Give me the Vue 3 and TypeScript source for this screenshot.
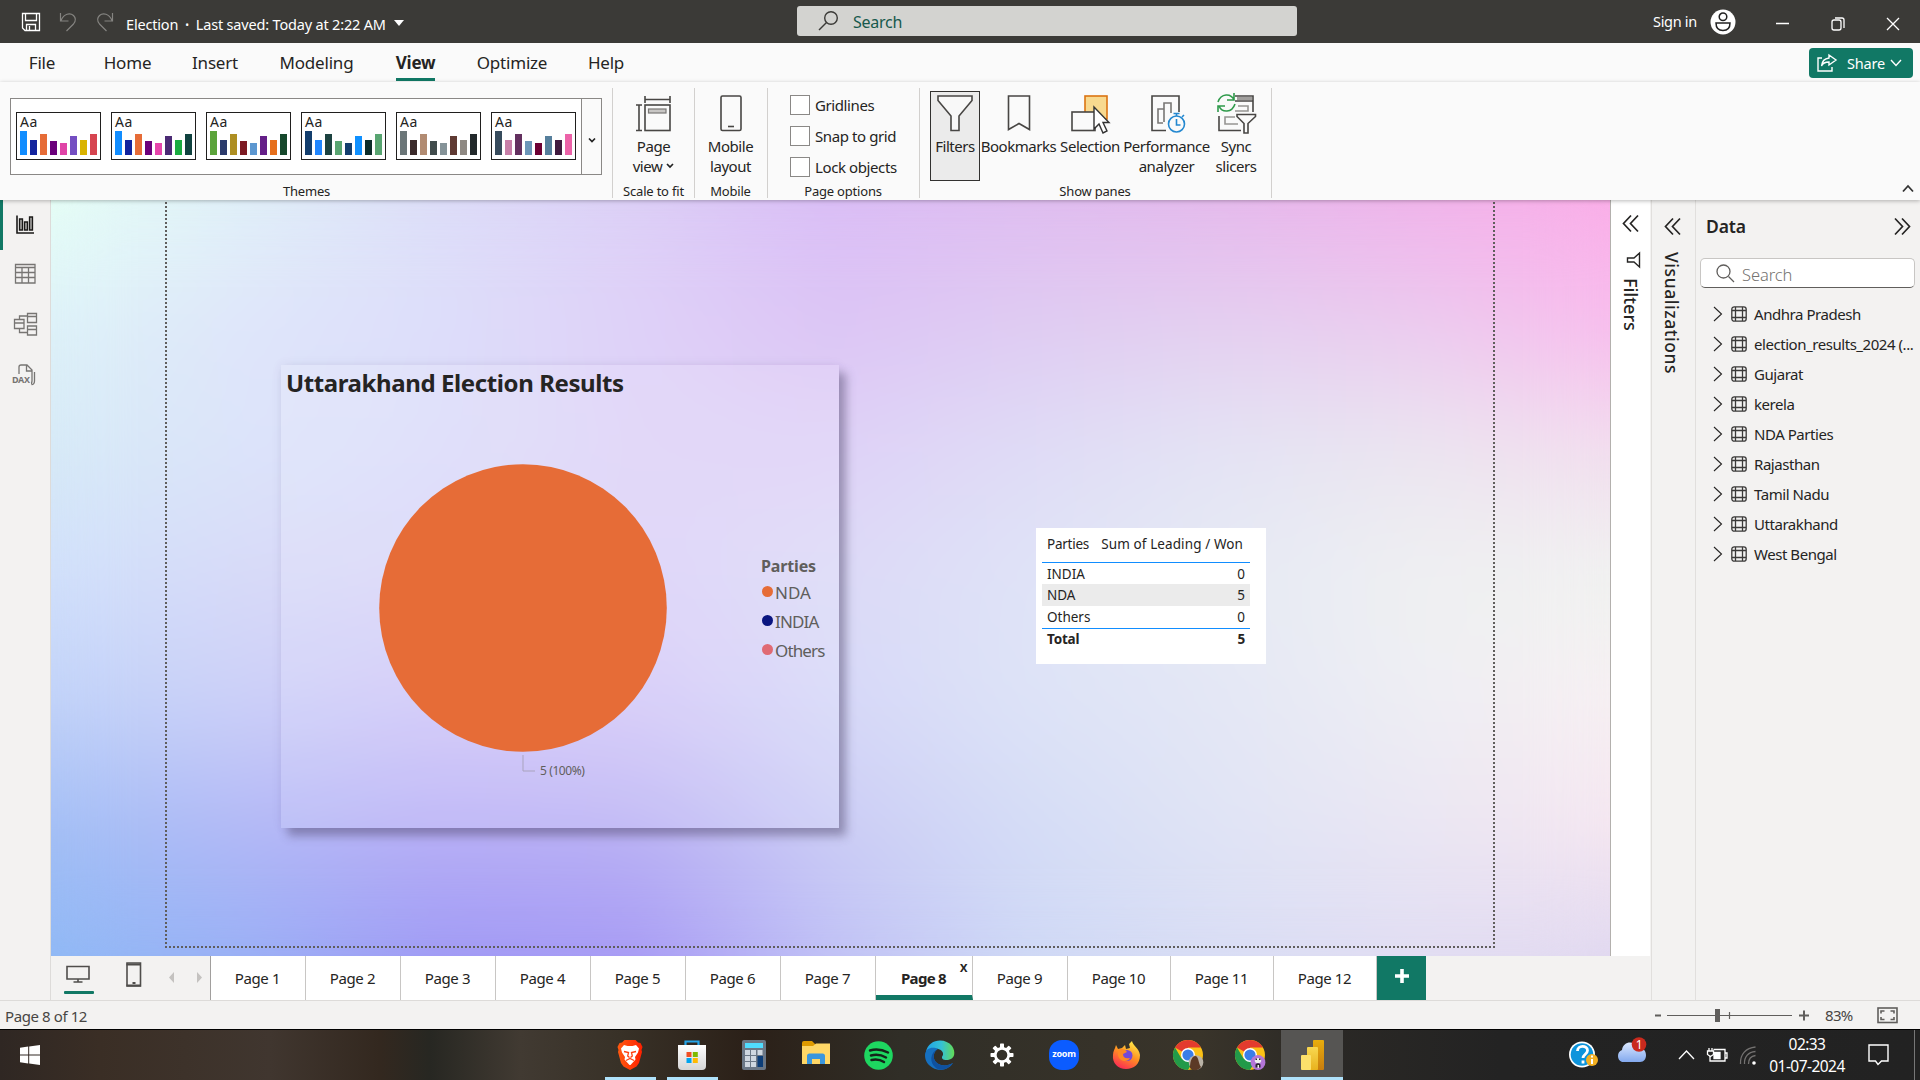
<script setup lang="ts">
const menu = [
  { label: 'File', width: 84 },
  { label: 'Home', width: 87 },
  { label: 'Insert', width: 88 },
  { label: 'Modeling', width: 115 },
  { label: 'View', width: 83 },
  { label: 'Optimize', width: 110 },
  { label: 'Help', width: 78 },
]

const barHeights = [24, 15, 21, 14, 12, 19, 15, 21]
const themes: string[][] = [
  ['#118dff', '#12239e', '#e66c37', '#6b007b', '#e044a7', '#744ec2', '#d9b300', '#d64550'],
  ['#118dff', '#12239e', '#e66c37', '#6b007b', '#e645ab', '#4b2a74', '#1aab40', '#10423f'],
  ['#5ba33a', '#2b3a6b', '#ae8f22', '#7d1a22', '#5c97d0', '#641f88', '#e66f1c', '#16482c'],
  ['#133e6d', '#2086ff', '#1c4240', '#58a571', '#133e6d', '#0f90ff', '#0c2c29', '#58a571'],
  ['#6b7678', '#3a2a2a', '#b18b72', '#414c4c', '#859398', '#5f3a33', '#8f8983', '#22292b'],
  ['#374b5c', '#c77fa8', '#63305f', '#6b96b8', '#6c0033', '#567f9c', '#401a3e', '#ec62a8'],
]

const options = ['Gridlines', 'Snap to grid', 'Lock objects']

const meshRows: string[][] = [
  ['#e6fff6', '#e0f0f8', '#ddddf8', '#dccff6', '#dabdf6', '#dfbcf0', '#e5b8ec', '#f0b2ea', '#fbaee8'],
  ['#ddf2f8', '#dfe5fa', '#dddefa', '#dfd1f8', '#dcc5f5', '#dfccf2', '#e4d0f0', '#ebccef', '#f8bded'],
  ['#d6eaf6', '#dce4fa', '#dcdcfa', '#ded3f7', '#dfd2f7', '#dfdcf6', '#e4e4f4', '#ebe6f0', '#f2deee'],
  ['#d0e0fb', '#d8daf8', '#d9d6fa', '#dcd2f8', '#dcdaf7', '#dfe3f7', '#e6eaf4', '#eff0f2', '#f0f2f0'],
  ['#c0d2f8', '#ccd0f8', '#d0c6f8', '#d4c8f8', '#d6d8f8', '#dde3f7', '#e4e7f5', '#eeeef3', '#f7eff2'],
  ['#a2bff5', '#b3b8f6', '#b8aff6', '#bab2f4', '#cbccf5', '#d4dcf6', '#e0e4f5', '#eae6f3', '#f5e6f0'],
  ['#8fb9f5', '#98aff5', '#9e98f4', '#a699f4', '#bfc0f5', '#ced8f5', '#d8dcf4', '#e0dcf2', '#e0d8f0'],
]
const mesh = meshRows.map((colors, i) => {
  const step = 100 / (meshRows.length - 1)
  return {
    backgroundImage: `linear-gradient(to right, ${colors.join(', ')})`,
    maskImage: i === 0 ? 'none' : `linear-gradient(transparent ${(i - 1) * step}%, #000 ${i * step}%)`,
  }
})

const legend = [
  { name: 'NDA', color: '#e66c37' },
  { name: 'INDIA', color: '#0a1580' },
  { name: 'Others', color: '#e06a74' },
]
const results = [
  { party: 'INDIA', won: 0 },
  { party: 'NDA', won: 5 },
  { party: 'Others', won: 0 },
]

const tables = ['Andhra Pradesh', 'election_results_2024 (...', 'Gujarat', 'kerela', 'NDA Parties', 'Rajasthan', 'Tamil Nadu', 'Uttarakhand', 'West Bengal']
const pages = Array.from({ length: 12 }, (_, i) => i + 1)
const teeth = Array.from({ length: 8 }, (_, i) => i * 45)
</script>

<template>
  <div class="app">
    <header class="titlebar">
      <svg class="quick" width="110" height="43" fill="none">
        <path d="M22.500 13.500h17v17h-14.500l-2.500-2.500zM25.500 13.500v7h11v-7M26.500 30.500v-6h9v6M29.500 26v4" stroke="#fff" stroke-width="1.300" />
        <path d="M60.500 13v8h8M61 20.500c3-7 9-8 12.500-5 3 3 2 6 0 8.500l-7 7" stroke="#858481" stroke-width="1.200" />
        <path d="M112.500 13v8h-8M112 20.500c-3-7-9-8-12.500-5-3 3-2 6 0 8.500l7 7" stroke="#858481" stroke-width="1.200" />
      </svg>
      <span class="doc">Election<i>•</i>Last saved: Today at 2:22 AM</span>
      <span class="doc-caret"></span>
      <div class="global-search">
        <svg width="22" height="22" viewBox="0 0 22 22" fill="none" stroke="#3b3a37" stroke-width="1.400"><circle cx="13" cy="8" r="6.300" /><path d="M8.500 12.500 1 20" /></svg>
        <span>Search</span>
      </div>
      <div class="account">
        <span class="signin">Sign in</span>
        <svg width="26" height="26" viewBox="0 0 26 26"><circle cx="13" cy="13" r="12.500" fill="#fff" /><circle cx="13" cy="7.800" r="3.800" fill="none" stroke="#222" stroke-width="1.500" /><path d="M6 14h14c0 5-3 7.500-7 7.500s-7-2.500-7-7.500z" fill="none" stroke="#222" stroke-width="1.500" /></svg>
      </div>
      <svg class="win" width="140" height="43" fill="none" stroke="#fff" stroke-width="1.300"><path d="M16 23.500h13M127 18l12 12M139 18l-12 12" /><rect x="72" y="20" width="9" height="10" rx="2" /><path d="M75 18h7q2 0 2 2v8" /></svg>
    </header>

    <nav class="menu">
      <div v-for="m in menu" :key="m.label" class="menu-item" :class="{ active: m.label === 'View' }" :style="{ width: m.width + 'px' }"><span>{{ m.label }}</span></div>
      <div class="share">
        <svg width="20" height="18" viewBox="0 0 20 18" fill="none" stroke="#fff" stroke-width="1.400"><path d="M5 4H1v13h14v-4" /><path d="M12 1l7 5-7 5V8C8 8 5.500 9.500 4.500 12 5 7 8 4.500 12 4z" /></svg>
        <span>Share</span>
        <svg width="12" height="8" fill="none" stroke="#fff" stroke-width="1.400"><path d="M1 1l5 5.500L11 1" /></svg>
      </div>
    </nav>

    <section class="ribbon">
      <div class="group g-themes">
        <div class="gallery">
          <div class="thumbs">
            <div v-for="(t, i) in themes" :key="i" class="thumb">
              <span>Aa</span>
              <div class="bars"><i v-for="(c, j) in t" :key="j" :style="{ height: barHeights[j] + 'px', background: c }"></i></div>
            </div>
          </div>
          <div class="more"><svg width="8" height="5" fill="none" stroke="#222" stroke-width="1.700"><path d="M1 .5l3 3 3-3" /></svg></div>
        </div>
        <div class="label">Themes</div>
      </div>
      <div class="group g-scale">
        <div class="tool">
          <svg width="38" height="42" fill="none" stroke="#484644" stroke-width="1.600"><path d="M11 2v7M36 2v7M11 5.500h25M2 11h6M2 36.500h6M5 11v25.500" /><rect x="11" y="11" width="25" height="25.500" /><rect x="14.500" y="15" width="17.500" height="4" fill="#c8c6c4" stroke="#797775" stroke-width="1.200" /></svg>
          <span>Page</span><span>view <svg width="8" height="6" fill="none" stroke="#222" stroke-width="1.700"><path d="M1 1l3 3 3-3" /></svg></span>
        </div>
        <div class="label">Scale to fit</div>
      </div>
      <div class="group g-mobile">
        <div class="tool">
          <svg width="24" height="42" fill="none" stroke="#484644" stroke-width="1.600"><rect x="2" y="2" width="20" height="34.500" rx="1.500" /><path d="M9 32.500h6" /></svg>
          <span>Mobile</span><span>layout</span>
        </div>
        <div class="label">Mobile</div>
      </div>
      <div class="group g-options">
        <div class="checks"><div v-for="o in options" :key="o" class="check"><b></b><span>{{ o }}</span></div></div>
        <div class="label">Page options</div>
      </div>
      <div class="group g-panes">
        <div class="tools">
          <div class="tool t-filter">
            <svg width="38" height="42" fill="none" stroke="#484644" stroke-width="1.600"><path d="M2 2h34v4.500L23 22v14.500h-8V22L2 6.500z" fill="#f8f8f8" /></svg>
            <span>Filters</span>
          </div>
          <div class="tool t-book">
            <svg width="26" height="42" fill="none" stroke="#484644" stroke-width="1.600"><path d="M2.500 2h21v33.500L13 29.500 2.500 35.500z" /></svg>
            <span>Bookmarks</span>
          </div>
          <div class="tool t-sel">
            <svg width="40" height="42" fill="none"><rect x="15" y="2" width="22" height="23" fill="#f8d98f" stroke="#db7412" stroke-width="1.600" /><rect x="2" y="18" width="23" height="18.500" fill="#fafafa" stroke="#484644" stroke-width="1.600" /><path d="M24 13v22l5-5 4 9 4-2-4-8.500h6z" fill="#fff" stroke="#333" stroke-width="1.400" /></svg>
            <span>Selection</span>
          </div>
          <div class="tool t-perf">
            <svg width="38" height="42" fill="none" stroke="#484644" stroke-width="1.600"><path d="M18 36.500H4V2h27v16" /><path d="M15 29h-5V15h6M16 28V9h7v10" stroke="#797775" /><g stroke="#2488d0"><circle cx="28.500" cy="30" r="8" fill="#fafafa" /><path d="M28.500 25v6h4M25.500 19.500h6M28.500 19v3M34 23l2-2" /></g></svg>
            <span>Performance</span><span>analyzer</span>
          </div>
          <div class="tool t-sync">
            <svg width="42" height="42" fill="none" stroke="#484644" stroke-width="1.600"><path d="M20 2h18v16M20 7h18M4 22v14.500h22" /><path d="M22 4.500h15" stroke="#a19f9d" stroke-width="3" /><path d="M23 12h10v5H20M20 23h-10v7h13" stroke="#979593" /><path d="M22 20.500h18.500v2L33 29.500V39h-4V29.500l-7-7z" fill="#fafafa" /><g stroke="#2f9a4b"><path d="M3 8C6-1 16-1 19 6M19-1v7h-7M20 10c-3 9-13 9-16 2M3 18v-6h7" /></g></svg>
            <span>Sync</span><span>slicers</span>
          </div>
        </div>
        <div class="label">Show panes</div>
      </div>
      <svg class="collapse" width="14" height="9" fill="none" stroke="#333" stroke-width="1.800"><path d="M2 7.500l5-5.500 5 5.500" /></svg>
    </section>

    <main class="work">
      <aside class="rail">
        <div class="rail-item on"><svg width="24" height="24" fill="none" stroke="#1b1a19" stroke-width="1.300"><path d="M4 2.500v17.500h17" stroke-width="1.600" /><path d="M6.500 6h3v11h-3zM11.500 9h3v8h-3zM16.500 4h3v13h-3z" fill="#a0a09e" /></svg></div>
        <div class="rail-item table"><svg width="24" height="24" fill="none" stroke="#777573" stroke-width="1.300"><path d="M2.500 2.500h19.500v18.500h-19.500zM2.500 5.500H22M2.500 10.500H22M2.500 15.500H22M9 5.500V21M15.500 5.500V21" /></svg></div>
        <div class="rail-item"><svg width="26" height="26" fill="none" stroke="#777573" stroke-width="1.300"><path d="M2.500 8.500h9.500v9h-9.500zM15.500 2.500h9v9h-9zM15.500 15h9v9h-9zM2.500 12H12M15.500 5.500h9M15.500 18.500h9M7.500 8.500V5h8M7.500 17.500V21.500h8" /></svg></div>
        <div class="rail-item dax"><svg width="26" height="26" fill="none" stroke="#777573" stroke-width="1.300"><path d="M7 16V4q0-2 2-2h6l5 5v11q0 3-2.500 3M14.500 2v6H20M22.500 9v9q0 3.500-3 3.500" /></svg><em>DAX</em></div>
      </aside>

      <div class="center">
        <div class="canvas">
          <div v-for="layer in ['sharp', 'soft']" :key="layer" class="wallpaper" :class="layer">
            <div v-for="(m, i) in mesh" :key="i" class="wash" :style="m"></div>
          </div>
          <div class="page-edge"></div>
          <div class="pie-card">
            <h2>Uttarakhand Election Results</h2>
            <svg class="pie" width="300" height="340"><circle cx="144" cy="144" r="143.800" fill="#e66c37" /><path d="M144 291v16h12" fill="none" stroke="#a9a3bd" /></svg>
            <span class="callout">5 (100%)</span>
            <div class="legend">
              <strong>Parties</strong>
              <div v-for="l in legend" :key="l.name"><i :style="{ background: l.color }"></i>{{ l.name }}</div>
            </div>
          </div>
          <div class="grid-card">
            <div class="tr head"><span>Parties</span><span>Sum of Leading / Won</span></div>
            <div v-for="r in results" :key="r.party" class="tr"><span>{{ r.party }}</span><span>{{ r.won }}</span></div>
            <div class="tr total"><span>Total</span><span>5</span></div>
          </div>
        </div>
        <div class="filters">
          <svg width="17" height="17" fill="none" stroke="#252423" stroke-width="1.700"><path d="M9 .5l-7.500 8 7.500 8M16 .5l-7.500 8 7.500 8" /></svg>
          <svg class="fun" width="15" height="16" fill="none" stroke="#252423" stroke-width="1.400"><path d="M13.500 1v14L8 10H1.500V6H8z" /></svg>
          <span>Filters</span>
        </div>
        <footer class="tabs">
          <div class="views">
            <svg width="159" height="44" fill="none" stroke="#4f4d4b" stroke-width="1.600"><path d="M16 10.500h22v12.500H16zM27 23v3M22.500 26h9" /><path d="M76 7h13.500v23H76z" /><path d="M75.500 8.500H90M75.500 29.500H90M81.500 27h3" stroke-width="2" /><path d="M123 16v11l-5-5.500zM146 16v11l5-5.500z" fill="#c4c2c0" stroke="none" /><rect x="13" y="35" width="30" height="3" rx="1" fill="#117865" stroke="none" /></svg>
          </div>
          <div v-for="p in pages" :key="p" class="tab" :class="{ wide: p > 9, current: p === 8 }">Page {{ p }}<b v-if="p === 8">x</b></div>
          <div class="add"><svg width="14" height="14"><path d="M7 0v14M0 7h14" stroke="#fff" stroke-width="3.600" /></svg></div>
        </footer>
      </div>

      <aside class="viz">
        <svg width="17" height="17" fill="none" stroke="#252423" stroke-width="1.700"><path d="M9 .5l-7.500 8 7.500 8M16 .5l-7.500 8 7.500 8" /></svg>
        <span>Visualizations</span>
      </aside>
      <aside class="data">
        <div class="data-head"><span>Data</span><svg width="17" height="17" fill="none" stroke="#252423" stroke-width="1.700"><path d="M1 .5l7.500 8-7.500 8M8 .5l7.500 8-7.500 8" /></svg></div>
        <div class="data-search"><svg width="19" height="19" fill="none" stroke="#605e5c" stroke-width="1.300"><circle cx="7.500" cy="7.500" r="6.500" /><path d="M12.500 12.500l5.500 5.500" /></svg><span>Search</span></div>
        <div v-for="t in tables" :key="t" class="row">
          <svg width="10" height="16" fill="none" stroke="#252423" stroke-width="1.100"><path d="M1 1l7.500 7L1 15" /></svg>
          <svg width="16" height="16" fill="none" stroke="#3b3a39" stroke-width="1.300"><rect x=".8" y=".8" width="14.400" height="14.400" rx="2.500" /><path d="M4.500 1v14M11.500 1v14M1 4.500h14M1 11.500h14" /></svg>
          <span>{{ t }}</span>
        </div>
      </aside>
    </main>

    <div class="status">
      <span>Page 8 of 12</span>
      <svg width="160" height="28" fill="none" stroke="#605e5c"><path d="M3 14.500h6M147 14.500h10M152 9.500v10" stroke-width="2" /><path d="M15 14.500h125M77.500 11v7" stroke-width="1.200" /><path d="M65.500 8v13" stroke-width="5" /></svg>
      <span class="pct">83%</span>
      <svg width="22" height="17" fill="none" stroke="#605e5c" stroke-width="1.600"><rect x="1" y="1" width="19" height="14.500" /><path d="M4 6.500V4h3.500M13.500 4H17v2.500M17 10v2.500h-3.500M7.500 12.500H4V10" /></svg>
    </div>

    <div class="taskbar">
      <svg class="start" width="20" height="20" fill="#fff"><path d="M0 2.800l8.200-1.200v8H0zM9.200 1.400L20 0v9.600H9.200zM0 10.500h8.200v8L0 17.300zM9.200 10.500H20V20L9.200 18.600z" /></svg>
      <div class="apps">
        <div class="slot open"><svg width="30" height="30" viewBox="0 0 30 30"><defs><linearGradient id="bv"><stop offset="0" stop-color="#ff5a10" /><stop offset="1" stop-color="#ff2000" /></linearGradient></defs><path d="M9.500 0h11l2.500 2.500 2.500 0.500 2 4-1 3 0.500 2-3 11-2.500 3.500L15 30l-6.500-3.500L6 23 3 12l.5-2-1-3 2-4 2.500-.5z" fill="url(#bv)" /><path d="M9 5l3.500 1h5L21 5l3 3.500-1 4-3 4.500.5 2.500-5 5.500h-1l-5-5.500.5-2.500-3-4.500-1-4z" fill="#fff" /><path d="M9 11.500l4.500 1-.8 3.500 1.800 1.500M21 11.500l-4.500 1 .8 3.500-1.800 1.500M11 20.500l4-2 4 2" fill="none" stroke="#ff4010" stroke-width="1.300" /></svg></div>
        <div class="slot open"><svg width="30" height="30" viewBox="0 0 30 30"><defs><linearGradient id="ms" y2="1" x2="0"><stop offset="0" stop-color="#fff" /><stop offset="1" stop-color="#d5d5d5" /></linearGradient></defs><path d="M8.500 8V1.500h13V8" fill="none" stroke="#25a4e8" stroke-width="2.200" /><path d="M1 5h28v21q0 4-4 4H5q-4 0-4-4z" fill="url(#ms)" /><path d="M9.500 12h5v5h-5z" fill="#f04f25" /><path d="M15.800 12h5v5h-5z" fill="#7fba00" /><path d="M9.500 18h5v5h-5z" fill="#00a4ef" /><path d="M15.800 18h5v5h-5z" fill="#ffb900" /></svg></div>
        <div class="slot"><svg width="24" height="30" viewBox="0 0 24 30"><rect width="24" height="30" rx="2" fill="#6b7786" /><path d="M3 3h18v5H3z" fill="#50dcff" /><path d="M3 10h5v5H3zM9 10h5v5H9zM15.500 10h5v5h-5zM3 16h5v5H3zM9 16h5v5H9zM3 22h5v5H3zM9 22h5v5H9z" fill="#cfd7e0" /><path d="M15.500 16h5.500v11h-5.500z" fill="#0c3d78" /></svg></div>
        <div class="slot"><svg width="28" height="28" viewBox="0 0 28 28"><path d="M0 2q0-2 2-2h8l3 3v5H0z" fill="#e09b00" /><path d="M0 5h11l3-2.500h14V23H0z" fill="#ffd766" /><path d="M5 23V15q0-2.500 2.500-2.500h13Q23 12.500 23 15v8h-5v-5h-8v5z" fill="#3a96dd" /></svg></div>
        <div class="slot"><svg width="29" height="29" viewBox="0 0 29 29"><circle cx="14.500" cy="14.500" r="14.300" fill="#1ed760" /><path d="M6 9.500q9-2.500 18 2M7 14.500q8-2 15 2M7.500 19q7-1.500 12.500 2" fill="none" stroke="#15241a" stroke-width="2.500" stroke-linecap="round" /></svg></div>
        <div class="slot"><svg width="30" height="30" viewBox="0 0 30 30"><defs><linearGradient id="eg"><stop offset="0" stop-color="#1fa2e8" /><stop offset=".55" stop-color="#35c1d4" /><stop offset="1" stop-color="#63dc55" /></linearGradient></defs><path d="M1 12C3-1 20-3 27 6c4 6 3 13-4 14-4 .5-8-1-5-5 1-5-6-8-12-5z" fill="url(#eg)" /><path d="M0 15C0 8 8 6 13 9c-5 2-7 13 3 16 5 1 8 0 12-2-5 8-15 8-20 5-5-3-8-7-8-13z" fill="#1670c0" /><path d="M13 9c-5 2-7 13 3 16 5 1 8 0 12-2-5 7-13 8-17 5-7-5-6-16 2-19z" fill="#0f519f" /></svg></div>
        <div class="slot"><svg width="24" height="24" viewBox="-12 -12 24 24"><g fill="#fff"><rect v-for="a in teeth" :key="a" x="-2" y="-11.500" width="4" height="5" rx=".7" :transform="`rotate(${a})`" /></g><circle r="6.700" fill="none" stroke="#fff" stroke-width="2.700" /></svg></div>
        <div class="slot"><div class="zoom-app">zoom</div></div>
        <div class="slot"><svg width="29" height="29" viewBox="0 0 29 29"><defs><linearGradient id="ff" x1=".8" y1="0" x2=".3" y2="1"><stop offset="0" stop-color="#fff04a" /><stop offset=".5" stop-color="#ff9121" /><stop offset="1" stop-color="#fa2a55" /></linearGradient></defs><path d="M4 4l2 4 4-1 3-3 1 4 4-1-1-4 3-3c1 5 7 7 8 14 0 9-6 14-14 14S0 22 1 14c0-4 2-6 3-10z" fill="url(#ff)" /><circle cx="15" cy="14.500" r="5.500" fill="#7549d8" /><path d="M6 9c4-2 7-1 9 2l-4 2c0 4 3 5 7 4-2 5-12 4-12-4z" fill="#ff8a24" /></svg></div>
        <div v-for="n in 2" :key="n" class="slot"><svg width="31" height="30" viewBox="0 0 31 30"><circle cx="15" cy="15" r="15" fill="#fbc116" /><path d="M15 15L2 7.500A15 15 0 0 1 28 7.500H15z" fill="#e33b2e" /><path d="M2 7.500A15 15 0 0 0 15 30l6.500-11L15 15l-6.500 3.500z" fill="#229a49" /><circle cx="15" cy="15" r="7" fill="#fff" /><circle cx="15" cy="15" r="5.600" fill="#3a7de8" /><g v-if="n === 1"><circle cx="23" cy="22.500" r="7.300" fill="#b9b2a6" /><path d="M17 28c0-5 1-11 5-12 4 0 3 7 6 11-3 4-8 4-11 1z" fill="#5c3a26" /></g><g v-else><circle cx="23" cy="22.500" r="7.400" fill="#b375d8" /><ellipse cx="23" cy="20.500" rx="3.200" ry="2.600" fill="#eee" /><path d="M20.500 27.500v-3q2.500-2.500 5 0v3zM20.500 18.500h1.500v1.500h-1.500zM24 18.500h1.500v1.500h-1.500z" fill="#2a2730" /><path d="M22.500 25h1.500v3h-1.500z" fill="#eee" /></g></svg></div>
        <div class="slot open focus"><svg width="23" height="30" viewBox="0 0 23 30"><defs><linearGradient id="pb" x2="0" y2="1"><stop offset="0" stop-color="#e8ad0d" /><stop offset="1" stop-color="#c87d0e" /></linearGradient><linearGradient id="pc" x2="0" y2="1"><stop offset="0" stop-color="#f8d750" /><stop offset="1" stop-color="#e8b21d" /></linearGradient></defs><rect x="12" width="11" height="30" rx="1" fill="url(#pb)" /><rect x="6" y="7" width="11" height="23" rx="1" fill="url(#pc)" /><rect y="15" width="10" height="15" rx="1" fill="#fce06b" /></svg></div>
      </div>
      <div class="tray">
        <svg width="30" height="28" viewBox="0 0 30 28"><circle cx="13" cy="13.500" r="13" fill="#fff" /><circle cx="13" cy="13.500" r="11.300" fill="#0d94dc" /><path d="M8.500 10c0-6 10-6 10-.5 0 3.500-4.500 4-4.500 7.500M14 19.500v3" fill="none" stroke="#fff" stroke-width="2.800" /><circle cx="23" cy="19" r="6" fill="#f3b022" /><path d="M23 18v5M23 14.500v2" stroke="#fff" stroke-width="2" /></svg>
        <svg class="cloud" width="32" height="28" viewBox="0 0 32 28"><defs><linearGradient id="cl" x2="0" y2="1"><stop offset="0" stop-color="#dbe8ff" /><stop offset="1" stop-color="#83a9ee" /></linearGradient></defs><path d="M6 25a6.500 6.500 0 0 1 0-12C7 4 19 3 21 11c5-1 9 2 9 7 0 4-2 7-6 7z" fill="url(#cl)" /><circle cx="23" cy="7.500" r="7.300" fill="#c92a1e" /><text x="23" y="12" text-anchor="middle" font-size="12" fill="#fff">1</text></svg>
        <svg class="sys" width="90" height="24" fill="none" stroke="#fff" stroke-width="1.300"><path d="M4 16l7.500-8 7.500 8" /><path d="M38.500 6.500H50v11.500H35v-5M50 10h2v5h-2" /><path d="M39 9.500h6v6h-6z" fill="#fff" /><path d="M32.500 8h6v3.500l-3 2-3-2zM34 5v3M37 5v3" fill="#252423" /><g stroke="#747271"><path d="M65.500 21C65 11 71 5 80.500 4M69.500 21C69 14 73 9 80.500 8.500M73.500 21c0-5 3-8 7-8.500" /></g><circle cx="79" cy="20" r="1.800" fill="#fff" stroke="none" /></svg>
        <div class="clock"><span>02:33</span><span>01-07-2024</span></div>
        <svg class="note" width="22" height="22" fill="none" stroke="#fff" stroke-width="1.400"><path d="M1 1h19v16h-6.500l-3.500 3.500-2.500-3.500H1z" /></svg>
      </div>
    </div>
  </div>
</template>

<style>
body { margin: 0; overflow: hidden; }
</style>

<style scoped>
* { box-sizing: border-box; }
svg { display: block; flex: none; overflow: visible; }
.app { width: 1920px; height: 1080px; display: flex; flex-direction: column; overflow: hidden; font-family: "Noto Sans", "Open Sans", sans-serif; font-size: 15px; letter-spacing: -0.400px; color: #252423; background: #f3f2f1; white-space: nowrap; }

.titlebar { height: 43px; flex: none; background: #3b3a37; color: #fff; display: flex; align-items: center; }
.quick { margin-right: 15px; }
.doc { width: 261px; font-size: 14.500px; letter-spacing: -0.180px; padding: 5px 0 0 1px; }
.doc i { font-style: normal; font-size: 10px; margin: 0 7px; position: relative; top: -1px; }
.doc-caret { margin: 3px 393px 0 8px; border: 5px solid transparent; border-top: 6px solid #fff; border-bottom: 0; }
.global-search { width: 500px; height: 30px; margin-top: -1px; border-radius: 3px; background: #d3d3d0; color: #17594c; display: flex; align-items: center; padding-left: 21px; gap: 13px; font-size: 16px; letter-spacing: -0.250px; }
.global-search span { padding-top: 1px; }
.account { margin-left: 356px; display: flex; align-items: center; gap: 12px; font-size: 14.500px; }
.signin { width: 45px; letter-spacing: -0.300px; margin-top: -1px; }
.win { margin-left: 24px; }

.menu { height: 39px; flex: none; display: flex; background: #fafafa; font-size: 17px; letter-spacing: -0.200px; }
.menu-item { display: flex; justify-content: center; height: 38px; line-height: 39px; }
.menu-item.active { font-weight: 700; }
.menu-item.active span { border-bottom: 3px solid #117865; letter-spacing: -0.300px; height: 38px; line-height: 39px; }
.share { margin: 5px 7px 0 auto; width: 104px; height: 30px; border-radius: 4px; background: #117865; color: #fff; display: flex; align-items: center; padding-left: 8px; font-size: 14.500px; }
.share span { margin: 0 6px 1px 10px; width: 37px; }

.ribbon { height: 118px; flex: none; display: flex; background: #fafafa; position: relative; z-index: 2; box-shadow: 0 1px 4px rgba(0, 0, 0, .28); }
.group { height: 118px; display: flex; flex-direction: column; align-items: center; justify-content: space-between; background: linear-gradient(#d2d0ce, #d2d0ce) right 6px / 1px 110px no-repeat; padding-right: 2px; }
.label { font-size: 13px; letter-spacing: -0.200px; line-height: 18px; height: 18px; }
.g-themes { width: 613px; padding-right: 0; }
.g-scale { width: 82px; padding-right: 1px; }
.g-mobile { width: 73px; }
.g-options { width: 152px; }
.g-panes { width: 352px; }
.gallery { margin: 16px 0 0 -1px; width: 592px; height: 77px; border: 1px solid #8a8886; background: #fff; display: flex; }
.thumbs { width: 571px; border-right: 1px solid #8a8886; padding: 13px 5px 0; display: flex; gap: 10px; }
.thumb { width: 85px; height: 48px; border: 1px solid #201f1e; padding: 1px 3px 4px; display: flex; flex-direction: column; justify-content: space-between; flex: none; }
.thumb span { font-size: 14px; line-height: 16px; letter-spacing: .5px; height: 16px; }
.bars { display: flex; align-items: flex-end; gap: 3px; }
.bars i { width: 7px; }
.more { flex: 1; display: flex; align-items: center; justify-content: center; padding-top: 8px; background: #fafafa; }
.tool { display: flex; flex-direction: column; align-items: center; padding-top: 12px; letter-spacing: -0.450px; }
.tool span { line-height: 20px; height: 20px; display: flex; align-items: center; gap: 4px; }
.tool > svg { height: 42px; }
.checks { display: flex; flex-direction: column; gap: 11px; padding: 13px 0 0 22px; align-self: flex-start; }
.check { height: 20px; display: flex; align-items: center; gap: 5px; }
.check b { width: 20px; height: 20px; border: 1px solid #8a8886; background: #fff; }
.tools { display: flex; align-self: stretch; padding: 9px 0 0 10px; }
.tools .tool { padding-top: 3px; }
.tools .t-filter { width: 50px; height: 90px; padding-top: 2px; border: 1px solid #323130; background: #ebebeb; }
.t-book { width: 77px; }
.t-sel { width: 66px; }
.t-perf { width: 87px; }
.t-sync { width: 52px; }
.collapse { position: absolute; right: 5px; top: 102px; }

.work { height: 800px; display: flex; flex: none; }
.rail { width: 51px; border-right: 1px solid #dddbd9; display: flex; flex-direction: column; }
.rail-item { height: 50px; display: flex; align-items: center; padding-left: 12px; position: relative; }
.rail-item.on { border-left: 3px solid #117865; padding-left: 10px; }
.rail-item svg { margin-top: -2px; }
.rail-item.on svg { margin-top: 0; }
.rail-item.table { padding-left: 13px; }
.rail-item.dax svg { margin-top: 2px; }
.dax em { position: absolute; left: 11px; top: 24px; font: 700 9px/12px "Noto Sans", sans-serif; color: #777573; background: #f3f2f1; padding: 0 1px; letter-spacing: -0.300px; }
.center { width: 1600px; display: flex; flex-wrap: wrap; align-content: flex-start; }
.canvas { width: 1559px; height: 756px; position: relative; overflow: hidden; }
.wallpaper, .wash { position: absolute; inset: 0; }
.soft { filter: blur(36px); }
.page-edge { position: absolute; left: 114px; top: -10px; width: 1330px; height: 758px; background: repeating-linear-gradient(#605e5c 0 2px, transparent 2px 4px) left / 2px 100% no-repeat, repeating-linear-gradient(#605e5c 0 2px, transparent 2px 4px) right / 2px 100% no-repeat, repeating-linear-gradient(90deg, #605e5c 0 2px, transparent 2px 4px) bottom / 100% 2px no-repeat; }
.pie-card { position: absolute; left: 230px; top: 165px; width: 558px; height: 463px; background: rgba(255, 255, 255, .13); }
.pie-card::before { content: ""; position: absolute; inset: 0; box-shadow: 7px 8px 9px rgba(70, 60, 95, .42), 0 0 10px rgba(60, 50, 90, .08); clip-path: polygon(-30px -30px, 588px -30px, 588px 493px, -30px 493px, -30px -30px, 0 0, 0 463px, 558px 463px, 558px 0, 0 0); }
.pie-card h2 { margin: 0; position: absolute; left: 5px; top: 2px; font-size: 24px; line-height: 32px; letter-spacing: -0.400px; }
.pie { position: absolute; left: 98px; top: 99px; }
.callout { position: absolute; left: 259px; top: 397px; font-size: 12px; line-height: 18px; color: #605e5c; }
.legend { position: absolute; left: 480px; top: 189px; color: #605e5c; font-size: 17px; line-height: 29px; letter-spacing: -0.850px; }
.legend strong { display: block; font-size: 16px; line-height: 24px; letter-spacing: -0.150px; }
.legend div { display: flex; align-items: center; gap: 2px; }
.legend div:nth-child(2) { letter-spacing: 0; }
.legend i { width: 11px; height: 11px; border-radius: 50%; margin: -3px 0 0 1px; }
.grid-card { position: absolute; left: 985px; top: 328px; width: 230px; height: 136px; background: #fff; padding: 0 16px 0 6px; font-size: 13.500px; letter-spacing: 0; }
.tr { display: flex; justify-content: space-between; height: 22px; line-height: 22px; padding: 0 5px 0 5px; }
.tr.head { height: 35px; line-height: 33px; border-bottom: 1px solid #118dff; padding-right: 7px; }
.tr.head span:first-child { letter-spacing: -0.250px; }
.tr.head span:last-child { letter-spacing: .1px; }
.tr:nth-child(2) { height: 21px; line-height: 22px; }
.tr:nth-child(3) { background: #ebebeb; }
.tr.total { border-top: 1px solid #118dff; font-weight: 700; line-height: 21px; letter-spacing: -0.200px; }
.filters { width: 40px; height: 756px; background: #fff; border-left: 1px solid #b3b0ad; display: flex; flex-direction: column; padding: 15px 0 0 11px; font-size: 18px; }
.fun { margin: 20px 0 10px 4px; }
.filters span, .viz span { writing-mode: vertical-rl; width: 20px; line-height: 20px; letter-spacing: 0; margin-left: -1px; font-weight: 500; }
.viz { width: 44px; border-left: 1px solid #e1dfdd; padding: 18px 0 0 12px; font-size: 17.500px; }
.viz span { margin: 17px 0 0 -2px; display: block; letter-spacing: .55px; }
.data { flex: 1; border-left: 1px solid #e1dfdd; padding: 0 5px 0 4px; }
.data-head { height: 58px; padding: 0 4px 6px 6px; display: flex; justify-content: space-between; align-items: center; font-size: 17.500px; font-weight: 600; letter-spacing: -0.100px; }
.data-search { height: 30px; border: 1px solid #c8c6c4; border-bottom-color: #605e5c; border-radius: 5px; background: #fff; display: flex; align-items: center; gap: 7px; padding-left: 15px; margin-bottom: 11px; color: #757371; font-size: 16.500px; font-weight: 300; letter-spacing: -0.100px; }
.data-search span { padding-top: 2px; }
.row { height: 30px; display: flex; align-items: center; padding-left: 13px; letter-spacing: -0.450px; }
.row svg + svg { margin: 0 7px 0 8px; }

.tabs { width: 1600px; height: 44px; display: flex; }
.views { width: 160px; border-right: 1px solid #a19f9d; }
.tab { width: 95px; background: #fff; border-right: 1px solid #c8c6c4; padding-right: 1px; text-align: center; line-height: 44px; position: relative; flex: none; }
.tab.wide { width: 103px; }
.tab.current { width: 97px; font-weight: 700; letter-spacing: -0.700px; border-bottom: 5px solid #117865; }
.tab b { position: absolute; right: 5px; top: 3px; font-size: 14px; line-height: 16px; font-weight: 600; }
.add { width: 49px; background: #117865; display: flex; justify-content: center; padding-top: 13px; }

.status { height: 29px; flex: none; border-top: 1px solid #dddbd9; display: flex; align-items: center; padding-left: 5px; color: #484644; }
.status > span:first-child { width: 1647px; padding-top: 2px; }
.pct { box-sizing: content-box; width: 38px; padding-left: 13px; margin-right: 14px; letter-spacing: -0.700px; }
.taskbar { height: 51px; flex: none; border-top: 1px solid #000; display: flex; align-items: center; background: linear-gradient(90deg, #2f2723, #3a2e25 100px, #40362f 270px, #33281f 380px, #272722 430px, #413a32 520px, #383127 620px, #2b2018 750px, #302e27 900px, #39342a 1200px, #2a2825 1330px, #232323 1500px, #222); color: #fff; }
.start { margin-left: 20px; }
.apps { display: flex; margin-left: 559px; height: 50px; }
.slot { width: 62px; display: flex; align-items: center; justify-content: center; position: relative; }
.open::after { content: ""; position: absolute; left: 6px; right: 5px; bottom: 0; height: 3px; background: #afe2fb; }
.focus { background: #565553; }
.focus::after { left: 0; right: 0; }
.zoom-app { width: 30px; height: 30px; border-radius: 13px; background: #0b5cff; font-size: 9px; font-weight: 700; line-height: 28px; text-align: center; letter-spacing: -0.300px; }
.tray { flex: 1; display: flex; align-items: center; padding-left: 226px; height: 50px; border-right: 1px solid #777; margin-right: 5px; }
.cloud { margin: -8px 0 0 17px; }
.sys { margin-left: 27px; }
.clock { width: 76px; margin-left: 4px; display: flex; flex-direction: column; align-items: center; line-height: 22px; font-size: 15.500px; letter-spacing: -0.550px; }
.note { margin-left: 23px; }
</style>
